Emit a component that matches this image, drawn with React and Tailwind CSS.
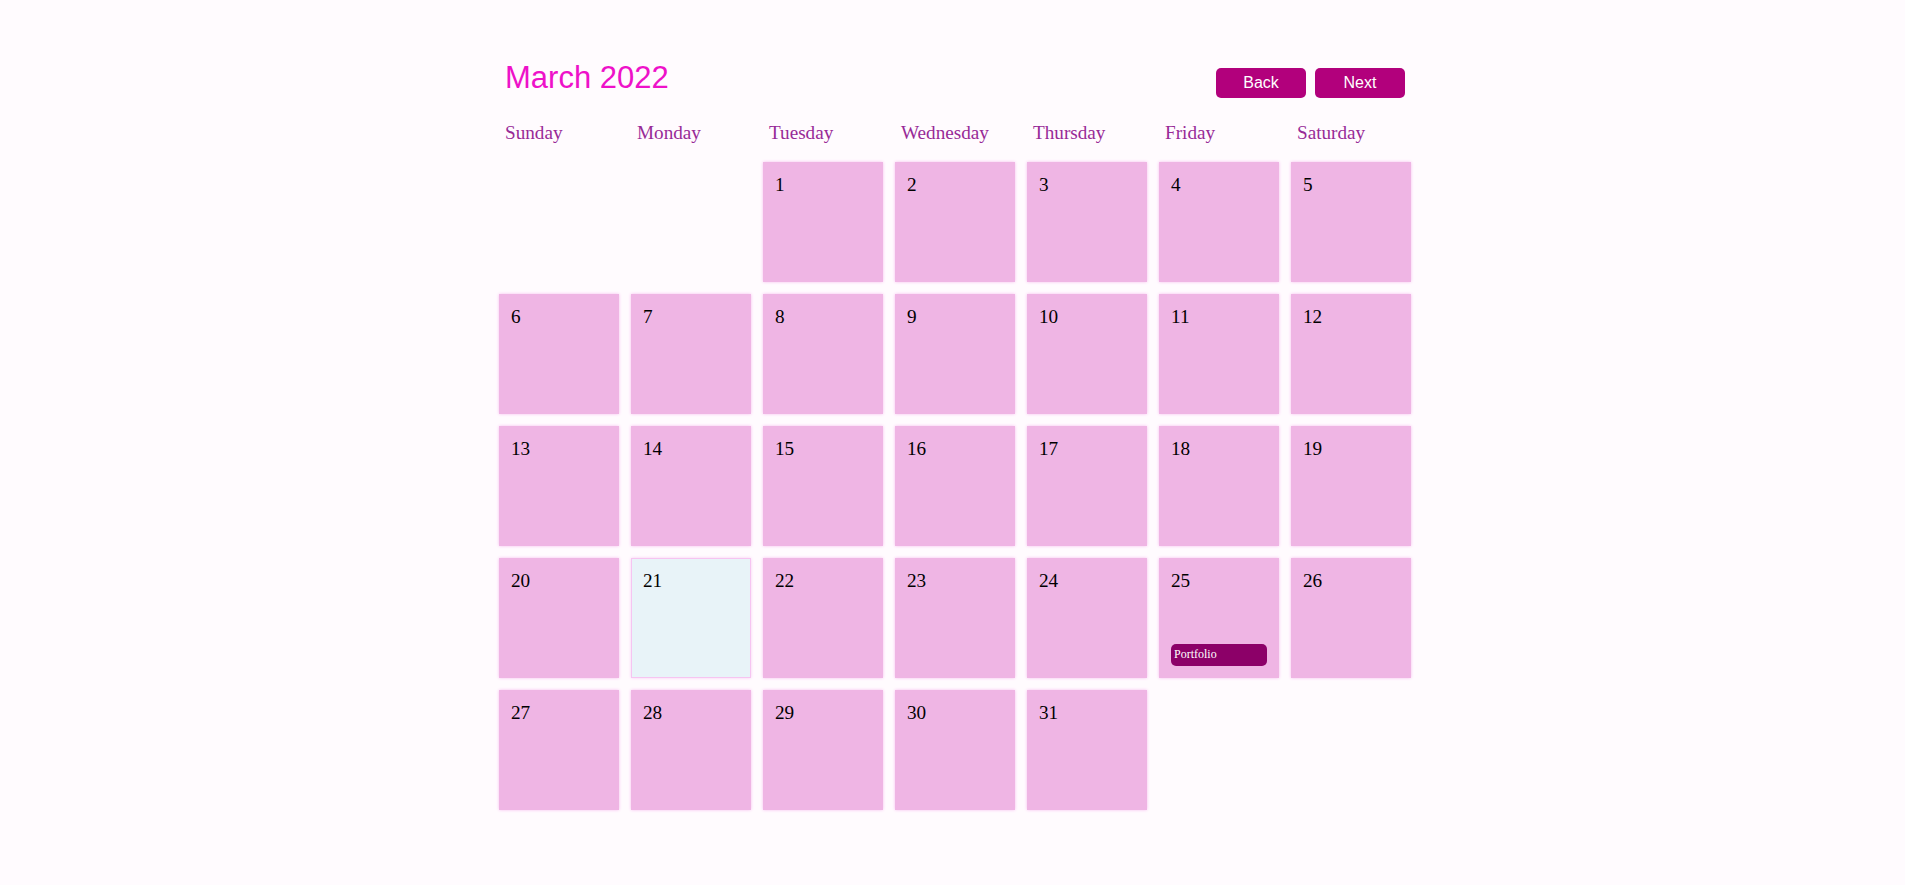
import React, { useState } from "react";

const DAYS = ["Sunday", "Monday", "Tuesday", "Wednesday", "Thursday", "Friday", "Saturday"];
const MONTHS = [
  "January", "February", "March", "April", "May", "June",
  "July", "August", "September", "October", "November", "December",
];

const events = {
  "2022-2-25": [{ title: "Portfolio" }],
};

const today = { year: 2022, month: 2, day: 21 };

const DayCell = ({ day, isToday, items }) => {
  if (!day) return <div className="h-[120px]" />;

  return (
    <div
      className={
        isToday
          ? "flex flex-col h-[120px] p-[12px] bg-[#e8f3f8] border border-[#f6c4f1] shadow-[0_0_3px_#f8cdf4]"
          : "flex flex-col h-[120px] p-[12px] bg-[#efb5e4] shadow-[0_0_3px_#f7bdf0]"
      }
    >
      <span className={isToday ? "text-[19.2px] leading-[22px] -mt-px -ml-px text-black" : "text-[19.2px] leading-[22px] text-black"}>
        {day}
      </span>
      {items && (
        <div className="mt-auto flex flex-col gap-1">
          {items.map((ev) => (
            <div
              key={ev.title}
              className="h-[22px] w-full rounded-[5px] bg-[#8c0068] pl-[3px] text-[12px] leading-[20px] text-white"
            >
              {ev.title}
            </div>
          ))}
        </div>
      )}
    </div>
  );
};

export default function App() {
  const [year, setYear] = useState(2022);
  const [month, setMonth] = useState(2);

  const first = new Date(year, month, 1).getDay();
  const count = new Date(year, month + 1, 0).getDate();
  const cells = [];
  for (let i = 0; i < first; i++) cells.push(null);
  for (let d = 1; d <= count; d++) cells.push(d);

  const goBack = () => {
    if (month === 0) {
      setMonth(11);
      setYear(year - 1);
    } else setMonth(month - 1);
  };

  const goNext = () => {
    if (month === 11) {
      setMonth(0);
      setYear(year + 1);
    } else setMonth(month + 1);
  };

  return (
    <div className="min-h-screen bg-[#fffbfe] font-['Times_New_Roman','Liberation_Serif',serif]">
      <div className="mx-auto w-[917px] pl-[5px] pt-[60px] pb-[60px]">
        <div className="flex items-start justify-between pl-[6px] pr-[6px]">
          <h1 className="font-['Arial','Liberation_Sans',sans-serif] text-[31px] leading-[35px] text-[#ee11c9]">
            {MONTHS[month]} {year}
          </h1>
          <div className="mt-[8px] flex gap-[9px] font-['Arial','Liberation_Sans',sans-serif]">
            <button
              onClick={goBack}
              className="h-[30px] w-[90px] rounded-[5px] bg-[#b2007c] text-[16px] text-white"
            >
              Back
            </button>
            <button
              onClick={goNext}
              className="h-[30px] w-[90px] rounded-[5px] bg-[#b2007c] text-[16px] text-white"
            >
              Next
            </button>
          </div>
        </div>

        <div className="mt-[24px] grid grid-cols-7 gap-x-[12px]">
          {DAYS.map((d) => (
            <div key={d} className="pl-[6px] text-[19.2px] leading-[22px] text-[#982a97]">
              {d}
            </div>
          ))}
        </div>

        <div className="mt-[18px] grid grid-cols-7 gap-[12px]">
          {cells.map((day, i) => (
            <DayCell
              key={i}
              day={day}
              isToday={day === today.day && month === today.month && year === today.year}
              items={day ? events[`${year}-${month}-${day}`] : null}
            />
          ))}
        </div>
      </div>
    </div>
  );
}
